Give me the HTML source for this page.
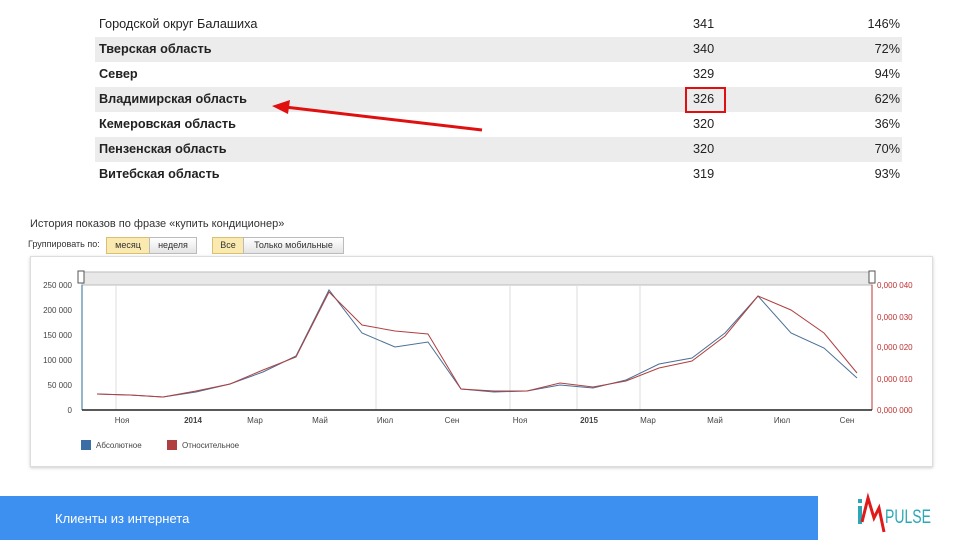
<!DOCTYPE html>
<html><head><meta charset="utf-8"><style>
body{margin:0;width:960px;height:540px;background:#fff;font-family:"Liberation Sans",sans-serif;position:relative;overflow:hidden}
.row{position:absolute;left:95px;width:807px;height:25px;font-size:12.7px;color:#222;line-height:25px}
.row.g{background:#ececec}
.row b,.row span{position:absolute}
.n{left:4px}.v{left:598px}.p{right:2px}
.a{position:absolute;font-size:10px;color:#444}
.btn{position:absolute;height:15px;top:237px;font-size:9px;line-height:15px;text-align:center;border:1px solid #bbb;background:linear-gradient(#fff,#e4e4e4);color:#333}
.btn.on{background:#fbeab0;border-color:#d8c070}
</style></head><body>
<div class="row" style="top:12px"><span class="n">Городской округ Балашиха</span><span class="v">341</span><span class="p">146%</span></div>
<div class="row g" style="top:37px;font-weight:bold"><b class="n">Тверская область</b><span class="v" style="font-weight:normal">340</span><span class="p" style="font-weight:normal">72%</span></div>
<div class="row" style="top:62px"><b class="n">Север</b><span class="v">329</span><span class="p">94%</span></div>
<div class="row g" style="top:87px"><b class="n">Владимирская область</b><span class="v">326</span><span class="p">62%</span></div>
<div class="row" style="top:112px"><b class="n">Кемеровская область</b><span class="v">320</span><span class="p">36%</span></div>
<div class="row g" style="top:137px"><b class="n">Пензенская область</b><span class="v">320</span><span class="p">70%</span></div>
<div class="row" style="top:162px"><b class="n">Витебская область</b><span class="v">319</span><span class="p">93%</span></div>
<div style="position:absolute;left:685px;top:87px;width:37px;height:22px;border:2px solid #e01010"></div>
<svg style="position:absolute;left:0;top:0" width="960" height="540">
<line x1="482" y1="130" x2="285" y2="107" stroke="#e01010" stroke-width="3"/>
<polygon points="272,106 290,100 288,114" fill="#e01010"/>
</svg>
<div class="a" style="left:30px;top:218px;font-size:11px;color:#333">История показов по фразе «купить кондиционер»</div>
<div class="a" style="left:28px;top:239px;font-size:9px;color:#333">Группировать по:</div>
<div class="btn on" style="left:106px;width:42px">месяц</div>
<div class="btn" style="left:149px;width:46px">неделя</div>
<div class="btn on" style="left:212px;width:30px">Все</div>
<div class="btn" style="left:243px;width:99px">Только мобильные</div>
<div style="position:absolute;left:30px;top:256px;width:901px;height:209px;border:1px solid #ddd;box-shadow:0 1px 3px #ccc"></div>
<svg style="position:absolute;left:0;top:0" width="960" height="540" font-family="Liberation Sans" font-size="8">
<rect x="82" y="272" width="790" height="13" fill="#e8e8e8" stroke="#bbb"/>
<rect x="78" y="271" width="6" height="12" fill="#fff" stroke="#555"/>
<rect x="869" y="271" width="6" height="12" fill="#fff" stroke="#555"/>
<g stroke="#ddd">
<line x1="116" y1="285" x2="116" y2="410"/><line x1="376" y1="285" x2="376" y2="410"/><line x1="510" y1="285" x2="510" y2="410"/><line x1="577" y1="285" x2="577" y2="410"/><line x1="640" y1="285" x2="640" y2="410"/></g>
<line x1="82" y1="285" x2="82" y2="410" stroke="#2a6f9a"/>
<line x1="872" y1="285" x2="872" y2="410" stroke="#c03030"/>
<line x1="82" y1="410" x2="872" y2="410" stroke="#222" stroke-width="1.5"/>
<g fill="#444" text-anchor="end"><text x="72" y="288">250 000</text><text x="72" y="313">200 000</text><text x="72" y="338">150 000</text><text x="72" y="363">100 000</text><text x="72" y="388">50 000</text><text x="72" y="413">0</text></g>
<g fill="#c03030"><text x="877" y="288">0,000 040</text><text x="877" y="320">0,000 030</text><text x="877" y="350">0,000 020</text><text x="877" y="382">0,000 010</text><text x="877" y="413">0,000 000</text></g>
<g fill="#444" text-anchor="middle"><text x="122" y="423">Ноя</text><text x="193" y="423" font-weight="bold">2014</text><text x="255" y="423">Мар</text><text x="320" y="423">Май</text><text x="385" y="423">Июл</text><text x="452" y="423">Сен</text><text x="520" y="423">Ноя</text><text x="589" y="423" font-weight="bold">2015</text><text x="648" y="423">Мар</text><text x="715" y="423">Май</text><text x="782" y="423">Июл</text><text x="847" y="423">Сен</text></g>
<polyline fill="none" stroke="#4a6f95" points="97,394 130,395 163,397 196,392 230,384 263,372 296,356 329,290 362,333 395,347 428,342 461,389 494,392 527,391 560,385 593,388 626,380 659,364 692,358 725,333 758,296 791,333 824,348 857,378"/>
<polyline fill="none" stroke="#b04040" points="97,394 130,395 163,397 196,391 230,384 263,370 296,357 329,292 362,325 395,331 428,334 461,389 494,391 527,391 560,383 593,387 626,381 659,368 692,361 725,336 758,296 791,310 824,333 857,373"/>
<rect x="81" y="440" width="10" height="10" fill="#3a6ea5"/><text x="96" y="448" fill="#444">Абсолютное</text>
<rect x="167" y="440" width="10" height="10" fill="#b04040"/><text x="182" y="448" fill="#444">Относительное</text>
</svg>
<div style="position:absolute;left:0;top:496px;width:818px;height:44px;background:#3d8ff0"></div>
<div style="position:absolute;left:55px;top:511px;color:#fff;font-size:13px">Клиенты из интернета</div>
<svg style="position:absolute;left:850px;top:488px" width="90" height="52">
<rect x="8" y="18" width="4" height="18" fill="#2aa8b8"/><rect x="8" y="11" width="4" height="4" fill="#2aa8b8"/>
<polyline points="12,34 18,10 24,30 29,20 34,44" fill="none" stroke="#e01a1a" stroke-width="3"/>
<text x="35" y="35" font-family="Liberation Sans" font-size="19" fill="#2aa8b8" textLength="46" lengthAdjust="spacingAndGlyphs">PULSE</text>
</svg>
</body></html>
